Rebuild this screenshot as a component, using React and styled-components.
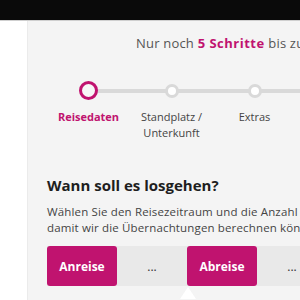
import styled, { createGlobalStyle } from "styled-components";

const GlobalStyle = createGlobalStyle`
	html, body {
		margin: 0;
		padding: 0;
		background: #fff;
		overflow: hidden;
	}
	body {
		font-family: "Open Sans", "Liberation Sans", sans-serif;
	}
`;

const TopBar = styled.header`
	height: 20px;
	background: #0a0a0a;
	border-bottom: 1px solid #cfcfcf;
`;

const Layout = styled.div`
	display: flex;
	height: 279px;
`;

const Gutter = styled.div`
	width: 27px;
	flex: none;
	background: #fff;
`;

const Panel = styled.main`
	flex: 1;
	min-width: 0;
	background: #f4f4f4;
	border-left: 1px solid #ebebeb;
	padding-left: 19px;
	overflow: hidden;
	white-space: nowrap;
`;

const Remaining = styled.p`
	margin: 14px 0 0 89px;
	font-size: 13px;
	line-height: 16px;
	color: #555;
	letter-spacing: 0.2px;

	strong {
		color: #c0136f;
		font-weight: 700;
		letter-spacing: 0.5px;
	}
`;

const Steps = styled.ol`
	display: flex;
	list-style: none;
	margin: 30px 0 0;
	padding: 0;
	width: 260px;
`;

const Step = styled.li`
	width: 83px;
	flex: none;
	display: flex;
	flex-direction: column;
	align-items: center;
	position: relative;

	&::before {
		content: "";
		position: absolute;
		top: 8px;
		left: 50%;
		width: 83px;
		height: 4px;
		background: #d9d9d9;
	}
`;

const Dot = styled.span`
	position: relative;
	z-index: 1;
	box-sizing: border-box;
	width: ${(p) => (p.$active ? "19px" : "14px")};
	height: ${(p) => (p.$active ? "19px" : "14px")};
	margin-top: ${(p) => (p.$active ? "0" : "3px")};
	margin-bottom: ${(p) => (p.$active ? "9px" : "11px")};
	border-radius: 50%;
	border: 3px solid ${(p) => (p.$active ? "#c0136f" : "#d9d9d9")};
	background: ${(p) => (p.$active ? "#f7f7f7" : "#fff")};
`;

const StepLabel = styled.span`
	font-size: 11px;
	line-height: 16px;
	text-align: center;
	white-space: normal;
	color: ${(p) => (p.$active ? "#c0136f" : "#444")};
	font-weight: ${(p) => (p.$active ? 700 : 400)};
`;

const Heading = styled.h2`
	margin: 34px 0 0;
	font-size: 15px;
	line-height: 20px;
	font-weight: 700;
	color: #1e1e1e;
`;

const Intro = styled.p`
	margin: 9px 0 0;
	font-size: 11.5px;
	line-height: 16px;
	color: #444;
	letter-spacing: 0.15px;
`;

const DateBar = styled.div`
	display: flex;
	margin-top: 10px;
	background: #e9e9e9;
	height: 40px;
	width: 400px;
`;

const DateButton = styled.button`
	position: relative;
	width: 70px;
	height: 40px;
	flex: none;
	border: none;
	border-radius: 3px;
	background: #c0136f;
	color: #fff;
	font-family: inherit;
	font-size: 12px;
	font-weight: 700;
	padding: 0;

	${(p) =>
		p.$open &&
		`
		&::after {
			content: "";
			position: absolute;
			left: -7px;
			top: 41px;
			border: 8px solid transparent;
			border-bottom: 12px solid #fff;
			border-top: none;
		}
	`}
`;

const DateValue = styled.span`
	width: 70px;
	flex: none;
	display: flex;
	align-items: center;
	justify-content: center;
	font-size: 12px;
	color: #333;
`;

const steps = [
	{ label: "Reisedaten", active: true },
	{ label: "Standplatz / Unterkunft" },
	{ label: "Extras" },
];

export default function App() {
	return (
		<>
			<GlobalStyle />
			<TopBar />
			<Layout>
				<Gutter />
				<Panel>
					<Remaining>
						Nur noch <strong>5 Schritte</strong> bis zu
					</Remaining>
					<Steps>
						{steps.map((s, i) => (
							<Step key={i}>
								<Dot $active={s.active} />
								<StepLabel $active={s.active}>
									{s.label === "Standplatz / Unterkunft" ? (
										<>
											Standplatz /<br />
											Unterkunft
										</>
									) : (
										s.label
									)}
								</StepLabel>
							</Step>
						))}
					</Steps>
					<Heading>Wann soll es losgehen?</Heading>
					<Intro>
						Wählen Sie den Reisezeitraum und die Anzahl de
						<br />
						damit wir die Übernachtungen berechnen können
					</Intro>
					<DateBar>
						<DateButton>Anreise</DateButton>
						<DateValue>...</DateValue>
						<DateButton $open>Abreise</DateButton>
						<DateValue>...</DateValue>
					</DateBar>
				</Panel>
			</Layout>
		</>
	);
}
